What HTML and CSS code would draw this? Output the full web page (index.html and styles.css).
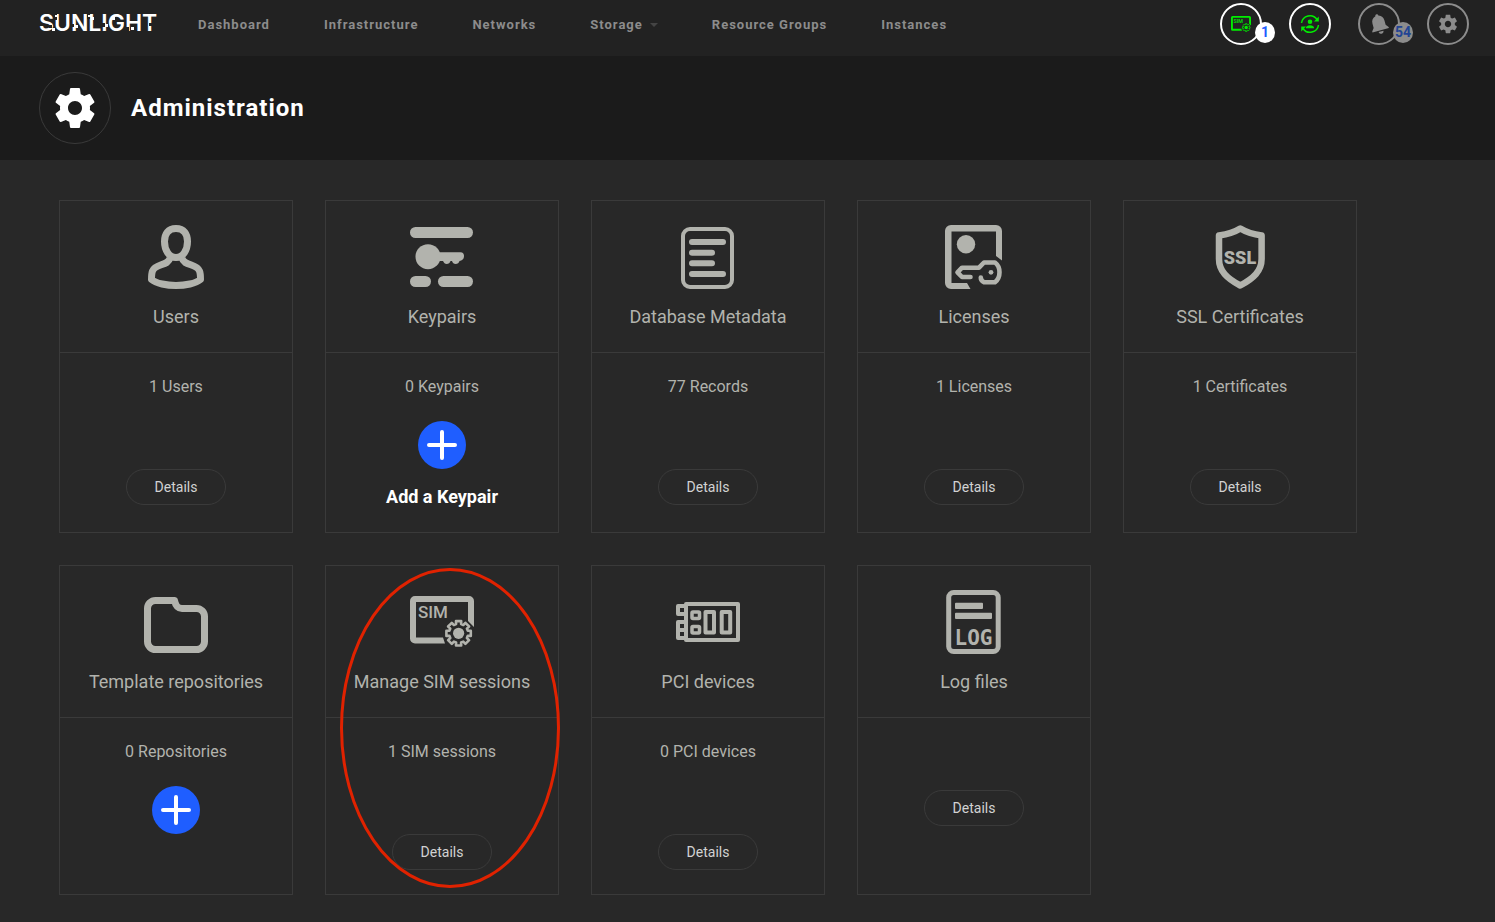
FILE: index.html
```html
<!DOCTYPE html>
<html lang="en">
<head>
<meta charset="utf-8">
<title>Administration</title>
<link rel="stylesheet" href="styles.css">
</head>
<body>
<svg class="sprite" aria-hidden="true">
  <symbol id="gear" viewBox="0 0 24 24"><path fill="currentColor" d="M19.43 12.98c.04-.32.07-.64.07-.98s-.03-.66-.07-.98l2.11-1.65c.19-.15.24-.42.12-.64l-2-3.46c-.12-.22-.39-.3-.61-.22l-2.49 1c-.52-.4-1.08-.73-1.69-.98l-.38-2.65C14.46 2.18 14.25 2 14 2h-4c-.25 0-.46.18-.49.42l-.38 2.65c-.61.25-1.17.59-1.69.98l-2.49-1c-.23-.09-.49 0-.61.22l-2 3.46c-.13.22-.07.49.12.64l2.11 1.65c-.04.32-.07.65-.07.98s.03.66.07.98l-2.11 1.65c-.19.15-.24.42-.12.64l2 3.46c.12.22.39.3.61.22l2.49-1c.52.4 1.08.73 1.69.98l.38 2.65c.03.24.24.42.49.42h4c.25 0 .46-.18.49-.42l.38-2.65c.61-.25 1.17-.59 1.69-.98l2.49 1c.23.09.49 0 .61-.22l2-3.46c.12-.22.07-.49-.12-.64l-2.11-1.65zM12 15.5c-1.93 0-3.5-1.57-3.5-3.5s1.57-3.5 3.5-3.5 3.5 1.57 3.5 3.5-1.57 3.5-3.5 3.5z"/></symbol>
  <symbol id="sim" viewBox="0 0 64 64">
    <path fill="currentColor" d="M5 6H59a5 5 0 0 1 5 5V37L58 31V12H6V47.500H33L35 53.500H5a5 5 0 0 1-5-5V11a5 5 0 0 1 5-5z"/>
    <text class="sim-text" x="8" y="28">SIM</text>
    <g transform="translate(48.600 43.300)">
      <path fill="none" stroke="currentColor" stroke-width="2.600" stroke-linejoin="round" d="M12.200-2.600 12.200 2.600 9.200 2.500 8.300 4.700 10.500 6.800 6.800 10.500 4.700 8.300 2.500 9.200 2.600 12.200-2.600 12.200-2.500 9.200-4.700 8.300-6.800 10.500-10.500 6.800-8.300 4.700-9.200 2.500-12.200 2.600-12.200-2.600-9.200-2.500-8.300-4.700-10.500-6.800-6.800-10.500-4.700-8.300-2.500-9.200-2.600-12.200 2.600-12.200 2.500-9.200 4.700-8.300 6.800-10.500 10.500-6.800 8.300-4.700 9.200-2.500z"/>
      <circle r="5.600" fill="currentColor"/>
    </g>
  </symbol>
  <symbol id="plus" viewBox="0 0 48 48"><circle cx="24" cy="24" r="24" fill="#1f5eff"/><path d="M24 11V37M11 24H37" stroke="#fff" stroke-width="4" stroke-linecap="round"/></symbol>
</svg>

<header class="topbar">
  <a class="logo" href="#" aria-label="Sunlight">
    <svg width="130" height="32" viewBox="0 0 130 32">
      <text class="logo-text" x="0" y="22">SUNLIGHT</text>
      <path fill="#222" d="M10 16h3v3h-3zM15 5h3v6h-3zM32 15h3v3h-3zM48 5h3v5h-3zM61 14h5v4h-5zM76 9h3v3h-3zM87 18h3v5h-3zM110 14h5v3h-5z"/>
      <path fill="#fff" d="M13 19h3v3h-3zM16 6h3v2h-3zM36 16h3v3h-3zM49 6h3v2h-3zM52 8h3v3h-3zM66 15h3v3h-3zM73 8h3v3h-3zM92 18h3v3h-3z"/>
    </svg>
  </a>
  <nav class="nav">
    <a href="#">Dashboard</a>
    <a href="#">Infrastructure</a>
    <a href="#">Networks</a>
    <a href="#">Storage<span class="caret"></span></a>
    <a href="#">Resource Groups</a>
    <a href="#">Instances</a>
  </nav>
  <div class="actions">
    <button class="round" aria-label="SIM sessions"><svg class="green" width="20" height="20"><use href="#sim"/></svg><span class="badge">1</span></button>
    <button class="round" aria-label="User session"><svg class="green" width="20" height="20" viewBox="0 0 20 20"><g fill="none" stroke="currentColor" stroke-width="1.500"><path d="M1.500 9A8.500 8.500 0 0 1 17 5.500"/><path d="M18.500 11A8.500 8.500 0 0 1 3 14.500"/></g><path fill="currentColor" d="M18.800 2.500V7.500H14zM1.200 17.500V12.500H6zM10 5.500a2.300 2.300 0 1 1 0 4.600 2.300 2.300 0 0 1 0-4.600zM5.800 14.200c0-4 8.400-4 8.400 0z"/></svg></button>
    <button class="round dim" aria-label="Notifications"><svg width="22" height="22" viewBox="0 0 22 22"><g fill="currentColor" transform="rotate(-15 11 11)"><path d="M11 1a1.500 1.500 0 0 1 1.500 1.600C15.700 3.300 17.200 6 17.200 9V13.500L19.500 16.500V17.500H2.500V16.500L4.800 13.500V9C4.800 6 6.300 3.300 9.500 2.600A1.500 1.500 0 0 1 11 1z"/><path d="M8.500 18.700H13.500a2.500 2.300 0 0 1-5 0z"/></g></svg><span class="badge">54</span></button>
    <button class="round dim" aria-label="Settings"><svg width="22" height="22"><use href="#gear"/></svg></button>
  </div>
</header>

<section class="hero">
  <span class="hero-icon"><svg width="48" height="48"><use href="#gear"/></svg></span>
  <h1>Administration</h1>
</section>

<main class="grid">
  <article class="card">
    <header class="card-head">
      <svg class="icon" viewBox="0 0 64 64"><g fill="none" stroke="currentColor" stroke-width="7" stroke-linejoin="round"><path d="M32 3.500C24 3.500 20.500 9 20.500 16.500 20.500 25 25 32.500 32 32.500S43.500 25 43.500 16.500C43.500 9 40 3.500 32 3.500z"/><path d="M26 33C24 41 11.500 38.500 8.500 46 7.500 48.500 7.500 52 7.500 54.500 12 58.500 23 60.500 32 60.500S52 58.500 56.500 54.500C56.500 52 56.500 48.500 55.500 46 52.500 38.500 40 41 38 33"/></g></svg>
      <h2>Users</h2>
    </header>
    <div class="card-body"><p>1 Users</p><button class="details">Details</button></div>
  </article>

  <article class="card">
    <header class="card-head">
      <svg class="icon" viewBox="0 0 64 64"><g fill="currentColor"><rect y="2" width="63" height="11" rx="5.500"/><rect y="51" width="21" height="11" rx="5.500"/><rect x="28" y="51" width="35" height="11" rx="5.500"/><circle cx="18" cy="31.700" r="12.500"/><path d="M28 27.300H50.500a3.800 3.800 0 0 1 3.500 4C54 34 52 36 49.500 36 49 38 47.500 39 45.700 39S42.500 38 42 36H40.500C40 38 38.500 39 36.700 39S34 38 33 36H28z"/></g></svg>
      <h2>Keypairs</h2>
    </header>
    <div class="card-body"><p>0 Keypairs</p><button class="add"><svg width="48" height="48"><use href="#plus"/></svg><span>Add a Keypair</span></button></div>
  </article>

  <article class="card">
    <header class="card-head">
      <svg class="icon" viewBox="0 0 64 64"><g fill="none" stroke="currentColor"><rect x="7" y="4" width="49" height="58" rx="7" stroke-width="4"/><path stroke-width="6" stroke-linecap="round" d="M16 17H47M16 27.700H36M16 38.300H36M16 49H47"/></g></svg>
      <h2>Database Metadata</h2>
    </header>
    <div class="card-body"><p>77 Records</p><button class="details">Details</button></div>
  </article>

  <article class="card">
    <header class="card-head">
      <svg class="icon" viewBox="0 0 64 64"><path fill="currentColor" d="M9 0H54a6 6 0 0 1 6 6V35.500L54 31V6.500H9.500V58H25L28.500 64H9a6 6 0 0 1-6-6V6a6 6 0 0 1 6-6z"/><circle cx="24" cy="19.300" r="9.200" fill="currentColor"/><path fill="none" stroke="currentColor" stroke-width="4.600" stroke-linecap="round" stroke-linejoin="round" d="M28.500 52H20L15.500 47.300 20 42.700H37L42 37.500H53C59 42 59 52.500 53 57.300H42C39.500 56 38.800 55 38.800 52.500"/><circle cx="49" cy="47.300" r="2.400" fill="currentColor"/></svg>
      <h2>Licenses</h2>
    </header>
    <div class="card-body"><p>1 Licenses</p><button class="details">Details</button></div>
  </article>

  <article class="card">
    <header class="card-head">
      <svg class="icon" viewBox="0 0 64 64"><path fill="none" stroke="currentColor" stroke-width="6.500" stroke-linejoin="round" d="M32.300 3.500C26 7.500 18 9.500 11 10.500V34C11 46 19 53.500 32.300 60.500 45.500 53.500 53.600 46 53.600 34V10.500C46 9.500 39 7.500 32.300 3.500z"/><text class="ssl-text" x="32" y="39" text-anchor="middle">SSL</text></svg>
      <h2>SSL Certificates</h2>
    </header>
    <div class="card-body"><p>1 Certificates</p><button class="details">Details</button></div>
  </article>

  <article class="card">
    <header class="card-head">
      <svg class="icon" viewBox="0 0 64 64"><path fill="none" stroke="currentColor" stroke-width="7" stroke-linejoin="round" d="M30.500 10.500H11.500A8 8 0 0 0 3.500 18.500V51.500A8 8 0 0 0 11.500 59.500H52.500A8 8 0 0 0 60.500 51.500V26.500A8 8 0 0 0 52.500 18.500H38C33 18.500 31.500 15 30.500 10.500z"/></svg>
      <h2>Template repositories</h2>
    </header>
    <div class="card-body"><p>0 Repositories</p><button class="add" aria-label="Add a repository"><svg width="48" height="48"><use href="#plus"/></svg></button></div>
  </article>

  <article class="card">
    <header class="card-head">
      <svg class="icon"><use href="#sim"/></svg>
      <h2>Manage SIM sessions</h2>
    </header>
    <div class="card-body"><p>1 SIM sessions</p><button class="details">Details</button></div>
    <svg class="highlight" viewBox="0 0 222 322" aria-hidden="true"><ellipse cx="110" cy="161" rx="108.500" ry="158.500"/></svg>
  </article>

  <article class="card">
    <header class="card-head">
      <svg class="icon" viewBox="0 0 64 64"><g fill="none" stroke="currentColor" stroke-width="4" stroke-linejoin="round"><rect x="10" y="14" width="52" height="36"/><path d="M9 16H2V24H9M9 32H2V48H9M2 40H9"/><rect x="16" y="22" width="7.500" height="6.500" rx="1" stroke-width="3.500"/><rect x="16" y="36.500" width="7.500" height="6.500" rx="1" stroke-width="3.500"/><rect x="29.500" y="22" width="8.500" height="20.500"/><rect x="45.700" y="22" width="8.500" height="20.500"/></g></svg>
      <h2>PCI devices</h2>
    </header>
    <div class="card-body"><p>0 PCI devices</p><button class="details">Details</button></div>
  </article>

  <article class="card">
    <header class="card-head">
      <svg class="icon" viewBox="0 0 64 64"><rect x="6.700" y="2.500" width="49.500" height="59" rx="5" fill="none" stroke="currentColor" stroke-width="5"/><path fill="currentColor" d="M14 12.700H40a1 1 0 0 1 1 1V18a1 1 0 0 1-1 1H14a1 1 0 0 1-1-1V13.700a1 1 0 0 1 1-1zM14 22.700H49a1 1 0 0 1 1 1V28a1 1 0 0 1-1 1H14a1 1 0 0 1-1-1V23.700a1 1 0 0 1 1-1z"/><text class="log-text" x="31.500" y="55" text-anchor="middle">LOG</text></svg>
      <h2>Log files</h2>
    </header>
    <div class="card-body card-body-plain"><button class="details">Details</button></div>
  </article>
</main>
</body>
</html>
```
FILE: styles.css
```css
* { box-sizing: border-box; }
body {
  margin: 0;
  min-height: 100vh;
  background: #282828;
  color: #b2b3ad;
  font-family: Roboto, sans-serif;
}
h1, h2, p { margin: 0; }
button { border: 0; padding: 0; background: none; color: inherit; font: inherit; cursor: pointer; }
a { color: inherit; text-decoration: none; }
svg { display: block; }
.sprite { position: absolute; width: 0; height: 0; }

.topbar { display: flex; align-items: flex-start; height: 56px; padding: 3px 26px 0 39px; background: #222; }
.logo { flex: 0 0 159px; padding-top: 6px; }
.logo-text { font: 600 23px Inter, sans-serif; fill: #fff; }
.nav { display: flex; gap: 54px; padding-top: 12px; font-size: 13px; font-weight: 700; line-height: 20px; letter-spacing: 1px; color: #8c8c8c; white-space: nowrap; }
.nav a { display: flex; align-items: center; }
.caret { margin-left: 7px; border: 4px solid transparent; border-top-color: #444; border-bottom: 0; }
.actions { display: flex; gap: 27px; margin-left: auto; }
.round { position: relative; display: grid; place-items: center; width: 42px; height: 42px; border: 2px solid #fff; border-radius: 50%; color: #8c8c8c; }
.dim { border-color: #8c8c8c; }
.green { color: #00ee00; }
.badge { position: absolute; right: -15px; bottom: 0; width: 20px; height: 21px; border-radius: 50%; background: #fff; color: #1f5eff; font-size: 14px; font-weight: 700; line-height: 21px; text-align: center; }
.dim .badge { background: #8c8c8c; color: #224494; }

.hero { display: flex; align-items: center; gap: 20px; padding: 16px 39px; background: #1b1b1b; color: #fff; }
.hero-icon { display: grid; place-items: center; width: 72px; height: 72px; border: 1px solid #3a3a3a; border-radius: 50%; }
.hero h1 { font-size: 24px; font-weight: 700; line-height: 32px; letter-spacing: 1px; }

.grid { display: grid; grid-template-columns: repeat(auto-fill, 234px); gap: 32px; padding: 40px 59px 27px; }
.card { position: relative; border: 1px solid #3a3a3a; }
.card-head { display: flex; flex-direction: column; align-items: center; gap: 16px; padding: 24px 0 23px; border-bottom: 1px solid #3a3a3a; }
.icon { width: 64px; height: 64px; }
.card h2 { font-size: 18px; font-weight: 400; line-height: 24px; white-space: nowrap; }
.card-body { display: flex; flex-direction: column; align-items: center; padding: 22px 0 24px; }
.card-body p { font-size: 16px; line-height: 24px; }
.details { width: 100px; height: 36px; margin-top: 70px; border: 1px solid #3a3a3a; border-radius: 18px; color: #d2d2d2; font-size: 14px; }
.card-body-plain .details { margin-top: 50px; }
.add { display: flex; flex-direction: column; align-items: center; gap: 16px; margin-top: 22px; color: #fff; font-size: 18px; font-weight: 700; line-height: 23px; }
.highlight { position: absolute; left: 14px; top: 1px; width: 222px; height: 322px; pointer-events: none; }
.highlight ellipse { fill: none; stroke: #e02200; stroke-width: 3px; }

.sim-text { font: 500 17px Roboto, sans-serif; fill: currentColor; }
.ssl-text { font: 900 18px Roboto, sans-serif; fill: currentColor; }
.log-text { font: 700 21px "DejaVu Sans Mono", monospace; fill: currentColor; }
```
